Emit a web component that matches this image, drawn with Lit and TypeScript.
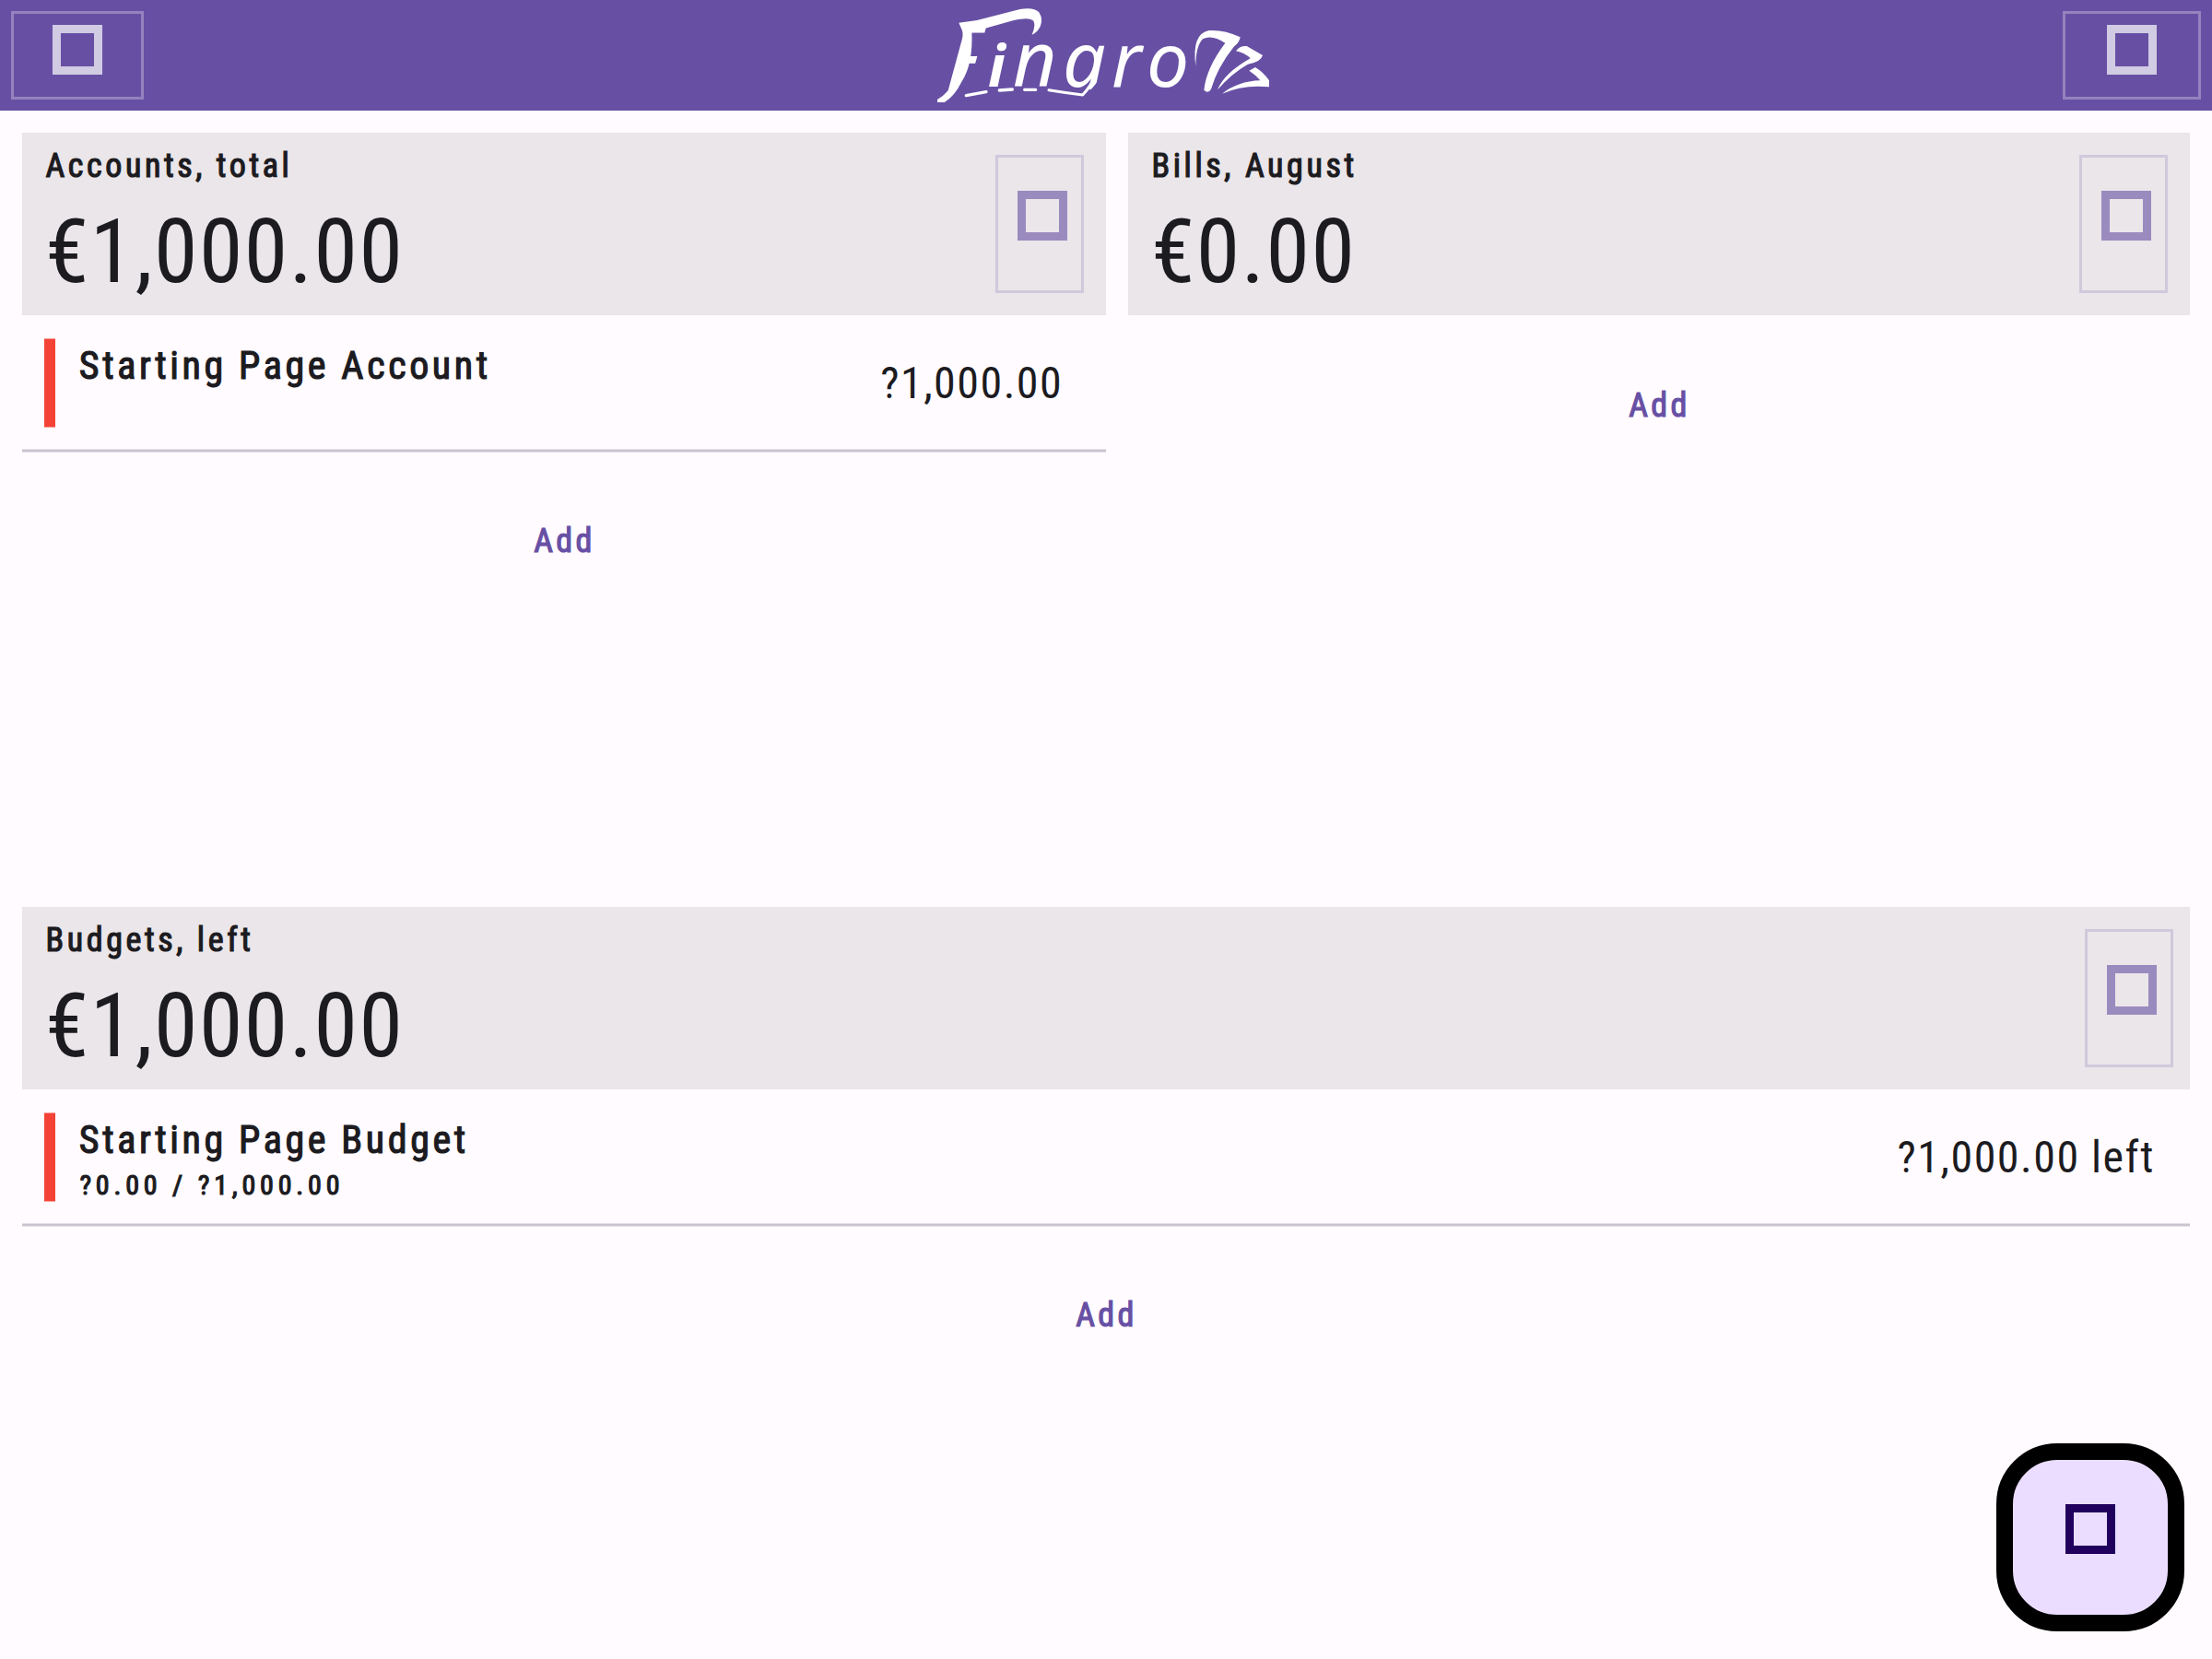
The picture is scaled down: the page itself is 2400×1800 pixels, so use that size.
import { LitElement, html, css, svg } from "lit";
import { customElement, property } from "lit/decorators.js";

interface Row {
  name: string;
  note: string;
  amount: string;
}

// Wordmark: italic lettering with hand-drawn swashes and a wing at its end
@customElement("fg-logo")
class FgLogo extends LitElement {
  static styles = css`
    :host { display: block; width: 360px; height: 102px; }
    svg { display: block; width: 100%; height: 100%; fill: #fff; }
    text { font-family: "Noto Sans", sans-serif; font-style: italic; font-size: 246px; font-weight: 450; }
    .small { font-size: 188px; font-weight: 700; }
    .cap { font-size: 300px; font-weight: 400; }
    .line { fill: none; stroke: #fff; stroke-linecap: round; stroke-linejoin: round; stroke-width: 10; }
    .thin { stroke-width: 9; }
  `;
  render() {
    return html`<svg viewBox="51 27 1080 306" role="img">
      <defs><clipPath id="bowl"><polygon points="440,100 620,100 620,240 571,268 551,292 440,292"></polygon></clipPath></defs>
      <text class="cap" transform="matrix(.62 0 -.14 1 78 298)">F</text>
      <text class="small" x="216" y="281">i</text>
      <text x="297" y="281">n</text>
      <g clip-path="url(#bowl)"><text x="459" y="281">g</text></g>
      <text x="618" y="281">r</text>
      <text x="732" y="281">o</text>
      ${svg`
      <path d="M121 74 L180 66 L320 30 Q364 22 382 40 Q396 62 386 86 Q376 106 359 113 Q372 84 364 68 Q352 54 300 66 L164 104 L134 104 Z"></path>
      <path d="M133 96 L163 100 Q168 210 130 266 Q108 312 74 333 L51 333 L51 324 Q88 304 110 255 Q138 190 133 96 Z"></path>
      <path class="line" d="M145 311 L210 299 M253 294 L295 291 M335 292 L371 292"></path>
      <path class="line thin" d="M414 293 Q470 302 524 309 Q550 282 566 244"></path>
      <path d="M892 217 Q878 110 935 99 Q985 96 1037 121 Q1034 140 1016 152 Q962 220 942 290 Q932 307 919 293 Q926 222 988 140 Q945 112 915 127 Q892 150 892 217 Z"></path>
      <path d="M1023 166 Q1036 148 1058 150 L1110 180 Q1104 202 1062 209 Q1010 238 963 292 Q985 238 1070 190 Q1052 172 1023 166 Z"></path>
      <path d="M1066 230 L1086 219 Q1114 236 1131 262 L1131 283 Q1048 274 978 305 Q1030 264 1102 262 Q1088 244 1066 230 Z"></path>`}
    </svg>`;
  }
}

@customElement("fg-card")
class FgCard extends LitElement {
  @property() heading = "";
  @property() total = "";
  @property({ attribute: false }) rows: Row[] = [];
  static styles = css`
    :host { display: block; min-width: 0; }
    .head { display: flex; justify-content: space-between; align-items: flex-start; box-sizing: border-box; height: 198px; padding: 12px var(--edge, 24px) 0 25.5px; background: #eae6e9; }
    .heading, .name, .note, .add { -webkit-text-stroke: 1.2px currentColor; letter-spacing: 3.6px; }
    .heading { font-size: 36px; line-height: 48px; }
    .total { margin: 9px 0 0 -0.6px; font-size: 96px; line-height: 120px; letter-spacing: 1.5px; }
    .btn { box-sizing: border-box; width: 96px; height: 150px; margin-top: 12px; padding: 36px 0 0 21px; border: 3px solid #cfc9dc; }
    .icon { display: block; box-sizing: border-box; width: 54px; height: 54px; border: 9px solid #9a8bbf; }
    .row { display: flex; align-items: flex-start; box-sizing: border-box; height: 145px; padding: 25px var(--amount-edge, 46.8px) 0 24px; }
    .bar { width: 12px; height: 97px; background: linear-gradient(#f9a09b 1px, #f44336 1px, #f44336 96px, #f9a09b 96px); }
    .label { flex: 1; margin: 3px 0 0 25.8px; }
    .name { font-size: 42px; line-height: 54px; }
    .note { margin: 1px 0 0 0.6px; font-size: 30px; line-height: 42px; letter-spacing: 4.8px; }
    .amount { margin-top: 19px; font-size: 48px; line-height: 60px; letter-spacing: 1.5px; }
    .rule { height: 4px; margin-bottom: -2px; background: linear-gradient(#e4dfe8 1px, #cac4d0 1px, #cac4d0 3px, #e4dfe8 3px); }
    .add { padding: 74px 0 0 1px; font-size: 36px; line-height: 48px; letter-spacing: 3.4px; text-align: center; color: #6750a4; }
  `;
  render() {
    return html`
      <div class="head">
        <div>
          <div class="heading">${this.heading}</div>
          <div class="total">${this.total}</div>
        </div>
        <div class="btn"><span class="icon"></span></div>
      </div>
      ${this.rows.map((r) => html`
        <div class="row">
          <div class="bar"></div>
          <div class="label">
            <div class="name">${r.name}</div>
            <div class="note">${r.note}</div>
          </div>
          <div class="amount">${r.amount}</div>
        </div>
        <div class="rule"></div>`)}
      <div class="add">Add</div>`;
  }
}

const ACCOUNTS: Row[] = [{ name: "Starting Page Account", note: "", amount: "?1,000.00" }];
const BUDGETS: Row[] = [{ name: "Starting Page Budget", note: "?0.00 / ?1,000.00", amount: "?1,000.00 left" }];

@customElement("app-root")
class AppRoot extends LitElement {
  static styles = css`
    :host { display: block; position: relative; width: 2400px; height: 1800px; overflow: hidden; background: #fffbff; color: #1c1b1f; font-family: "Roboto Condensed", Roboto, sans-serif; }
    header { display: flex; justify-content: space-between; align-items: center; box-sizing: border-box; height: 120px; padding: 0 12px; background: #6750a4; }
    .nav { box-sizing: border-box; height: 96px; width: 144px; padding-top: 12px; border: 3px solid #9582be; }
    .nav.end { width: 150px; }
    .icon { display: block; box-sizing: border-box; width: 54px; height: 54px; margin: 0 auto; border: 9px solid #d1cbe3; }
    main { display: grid; grid-template: 816px 816px / 1176px 1152px; gap: 24px; padding: 24px 24px 0; }
    .wide { grid-column: 1 / -1; --edge: 18px; --amount-edge: 38px; }
    .fab { position: absolute; right: 30px; bottom: 30px; box-sizing: border-box; width: 204px; height: 204px; padding-top: 48px; border: 18px solid #000; border-radius: 66px; background: #eaddff; }
    .fab .icon { border-color: #21005d; }
  `;
  render() {
    return html`
      <header>
        <div class="nav"><span class="icon"></span></div>
        <fg-logo></fg-logo>
        <div class="nav end"><span class="icon"></span></div>
      </header>
      <main>
        <fg-card heading="Accounts, total" total="€1,000.00" .rows=${ACCOUNTS}></fg-card>
        <fg-card heading="Bills, August" total="€0.00"></fg-card>
        <fg-card class="wide" heading="Budgets, left" total="€1,000.00" .rows=${BUDGETS}></fg-card>
      </main>
      <div class="fab"><span class="icon"></span></div>`;
  }
}
